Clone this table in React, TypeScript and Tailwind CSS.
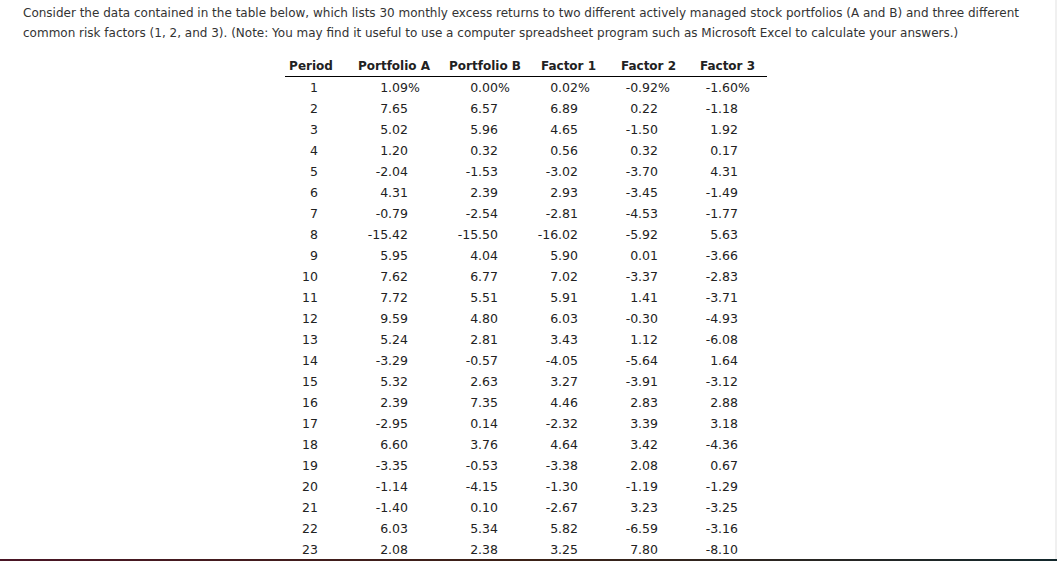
import React from 'react';

const ROWS: string[][] = [
  ['1', '1.09', '0.00', '0.02', '-0.92', '-1.60'],
  ['2', '7.65', '6.57', '6.89', '0.22', '-1.18'],
  ['3', '5.02', '5.96', '4.65', '-1.50', '1.92'],
  ['4', '1.20', '0.32', '0.56', '0.32', '0.17'],
  ['5', '-2.04', '-1.53', '-3.02', '-3.70', '4.31'],
  ['6', '4.31', '2.39', '2.93', '-3.45', '-1.49'],
  ['7', '-0.79', '-2.54', '-2.81', '-4.53', '-1.77'],
  ['8', '-15.42', '-15.50', '-16.02', '-5.92', '5.63'],
  ['9', '5.95', '4.04', '5.90', '0.01', '-3.66'],
  ['10', '7.62', '6.77', '7.02', '-3.37', '-2.83'],
  ['11', '7.72', '5.51', '5.91', '1.41', '-3.71'],
  ['12', '9.59', '4.80', '6.03', '-0.30', '-4.93'],
  ['13', '5.24', '2.81', '3.43', '1.12', '-6.08'],
  ['14', '-3.29', '-0.57', '-4.05', '-5.64', '1.64'],
  ['15', '5.32', '2.63', '3.27', '-3.91', '-3.12'],
  ['16', '2.39', '7.35', '4.46', '2.83', '2.88'],
  ['17', '-2.95', '0.14', '-2.32', '3.39', '3.18'],
  ['18', '6.60', '3.76', '4.64', '3.42', '-4.36'],
  ['19', '-3.35', '-0.53', '-3.38', '2.08', '0.67'],
  ['20', '-1.14', '-4.15', '-1.30', '-1.19', '-1.29'],
  ['21', '-1.40', '0.10', '-2.67', '3.23', '-3.25'],
  ['22', '6.03', '5.34', '5.82', '-6.59', '-3.16'],
  ['23', '2.08', '2.38', '3.25', '7.80', '-8.10'],
];

const Value: React.FC<{ v: string; pct: boolean; last?: boolean }> = ({ v, pct, last }) => (
  <div className={last ? 'flex justify-end pr-[16px]' : 'flex justify-end pr-[9px]'}>
    <span>{v}</span>
    <span className="w-[13px] text-left">{pct ? '%' : ''}</span>
  </div>
);

export default function App() {
  return (
    <div className="w-[1057px] h-[561px] flex flex-col bg-white overflow-hidden font-['DejaVu_Sans',sans-serif] text-[12px]">
      <div className="flex flex-1 min-h-0">
        <div className="flex-1 overflow-hidden">
          <p className="pl-[23px] pt-[3px] leading-[20px] text-[#333] whitespace-nowrap">
            Consider the data contained in the table below, which lists 30 monthly excess returns to two different actively managed stock portfolios (A and B) and three different
            <br />
            common risk factors (1, 2, and 3). (Note: You may find it useful to use a computer spreadsheet program such as Microsoft Excel to calculate your answers.)
          </p>

          <div className="ml-[285px] mt-[12px] w-[482px] text-[#222] leading-[21px]">
            <div className="grid grid-cols-[55px_90px_90px_80px_80px_87px] border-b border-black font-bold whitespace-nowrap pt-[1px] leading-[20px]">
              <div className="flex justify-center pr-[3px]">Period</div>
              <div className="flex justify-center pl-[18px]">Portfolio A</div>
              <div className="flex justify-center pl-[20px]">Portfolio B</div>
              <div className="flex justify-center pl-[17px]">Factor 1</div>
              <div className="flex justify-center pl-[17px]">Factor 2</div>
              <div className="flex justify-center pl-[8px]">Factor 3</div>
            </div>
            {ROWS.map((r, i) => (
              <div key={r[0]} className="grid grid-cols-[55px_90px_90px_80px_80px_87px] whitespace-nowrap text-[12.5px]">
                <div className="text-right pr-[22px]">{r[0]}</div>
                <Value v={r[1]} pct={i === 0} />
                <Value v={r[2]} pct={i === 0} />
                <Value v={r[3]} pct={i === 0} />
                <Value v={r[4]} pct={i === 0} />
                <Value v={r[5]} pct={i === 0} last />
              </div>
            ))}
          </div>
        </div>
        <div className="w-[2px] bg-[#f0f0f0]" />
      </div>
      <div className="h-[2px] bg-gradient-to-r from-[#4a1525] via-[#3b2116] to-[#13282c]" />
    </div>
  );
}
